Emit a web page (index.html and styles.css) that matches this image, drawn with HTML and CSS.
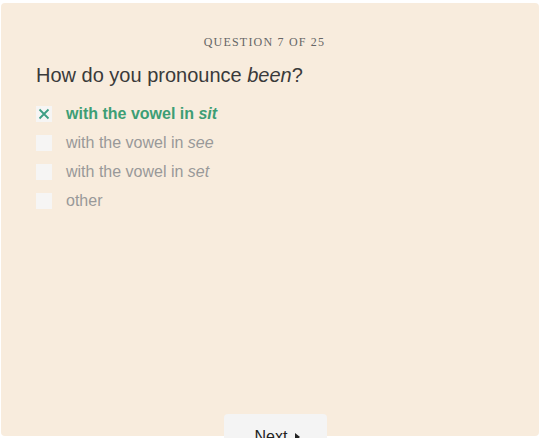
FILE: index.html
```html
<!DOCTYPE html>
<html>
<head>
<meta charset="utf-8">
<link rel="stylesheet" href="styles.css">
</head>
<body>
<div class="card">
  <div class="counter">Question 7 of 25</div>
  <h1 class="title">How do you pronounce <em>been</em>?</h1>
  <ul class="options">
    <li class="option selected">
      <span class="box"><svg width="12" height="12" viewBox="0 0 12 12"><path d="M1.5 1.5 L10.5 10.5 M10.5 1.5 L1.5 10.5" stroke="#3d9e84" stroke-width="1.8" fill="none"/></svg></span>
      <span class="label">with the vowel in <em>sit</em></span>
    </li>
    <li class="option">
      <span class="box"></span>
      <span class="label">with the vowel in <em>see</em></span>
    </li>
    <li class="option">
      <span class="box"></span>
      <span class="label">with the vowel in <em>set</em></span>
    </li>
    <li class="option">
      <span class="box"></span>
      <span class="label">other</span>
    </li>
  </ul>
  <div class="actions">
    <button class="next">Next <span class="arrow"></span></button>
  </div>
</div>
</body>
</html>
```
FILE: styles.css
```css
html, body {
  margin: 0;
  padding: 0;
  background: #ffffff;
}
body {
  height: 438px;
  overflow: hidden;
}
.card {
  margin: 3px 2px 0 1px;
  height: 433px;
  background: #f8ecdd;
  border-radius: 4px;
  padding: 32px 0 0 35px;
  box-sizing: border-box;
  display: flex;
  flex-direction: column;
}
.counter {
  font-family: "Liberation Serif", "DejaVu Serif", serif;
  font-size: 12px;
  letter-spacing: 1.2px;
  text-transform: uppercase;
  color: #666666;
  text-align: center;
  line-height: 14px;
  padding-right: 46px;
}
.title {
  margin: 14px 0 0 0;
  font-family: "Liberation Sans", Arial, sans-serif;
  font-weight: normal;
  font-size: 20px;
  line-height: 24px;
  color: #3a3a3a;
}
.title em {
  font-style: italic;
}
.options {
  list-style: none;
  margin: 17px 0 0 0;
  padding: 0;
  display: flex;
  flex-direction: column;
  gap: 10px;
}
.option {
  display: flex;
  align-items: center;
  gap: 14px;
  height: 19px;
  font-family: "Liberation Sans", Arial, sans-serif;
  font-size: 16px;
  color: #999999;
}
.box {
  width: 16px;
  height: 16px;
  background: #f6f5f4;
  display: flex;
  align-items: center;
  justify-content: center;
  flex: none;
}
.selected .label {
  color: #3d9e75;
  font-weight: bold;
}
.actions {
  margin-top: auto;
  display: flex;
  justify-content: center;
  padding-right: 25px;
}
.next {
  width: 103px;
  height: 30px;
  margin-bottom: -8px;
  border: none;
  border-radius: 4px;
  background: #f4f4f4;
  font-family: "Liberation Sans", Arial, sans-serif;
  font-size: 16px;
  color: #222222;
  padding: 14px 0 0 5px;
  display: flex;
  justify-content: center;
  align-items: flex-start;
  gap: 8px;
  box-sizing: border-box;
}
.arrow {
  width: 0;
  height: 0;
  border-left: 5px solid #222222;
  border-top: 4px solid transparent;
  border-bottom: 4px solid transparent;
  margin-top: 5px;
}
```
